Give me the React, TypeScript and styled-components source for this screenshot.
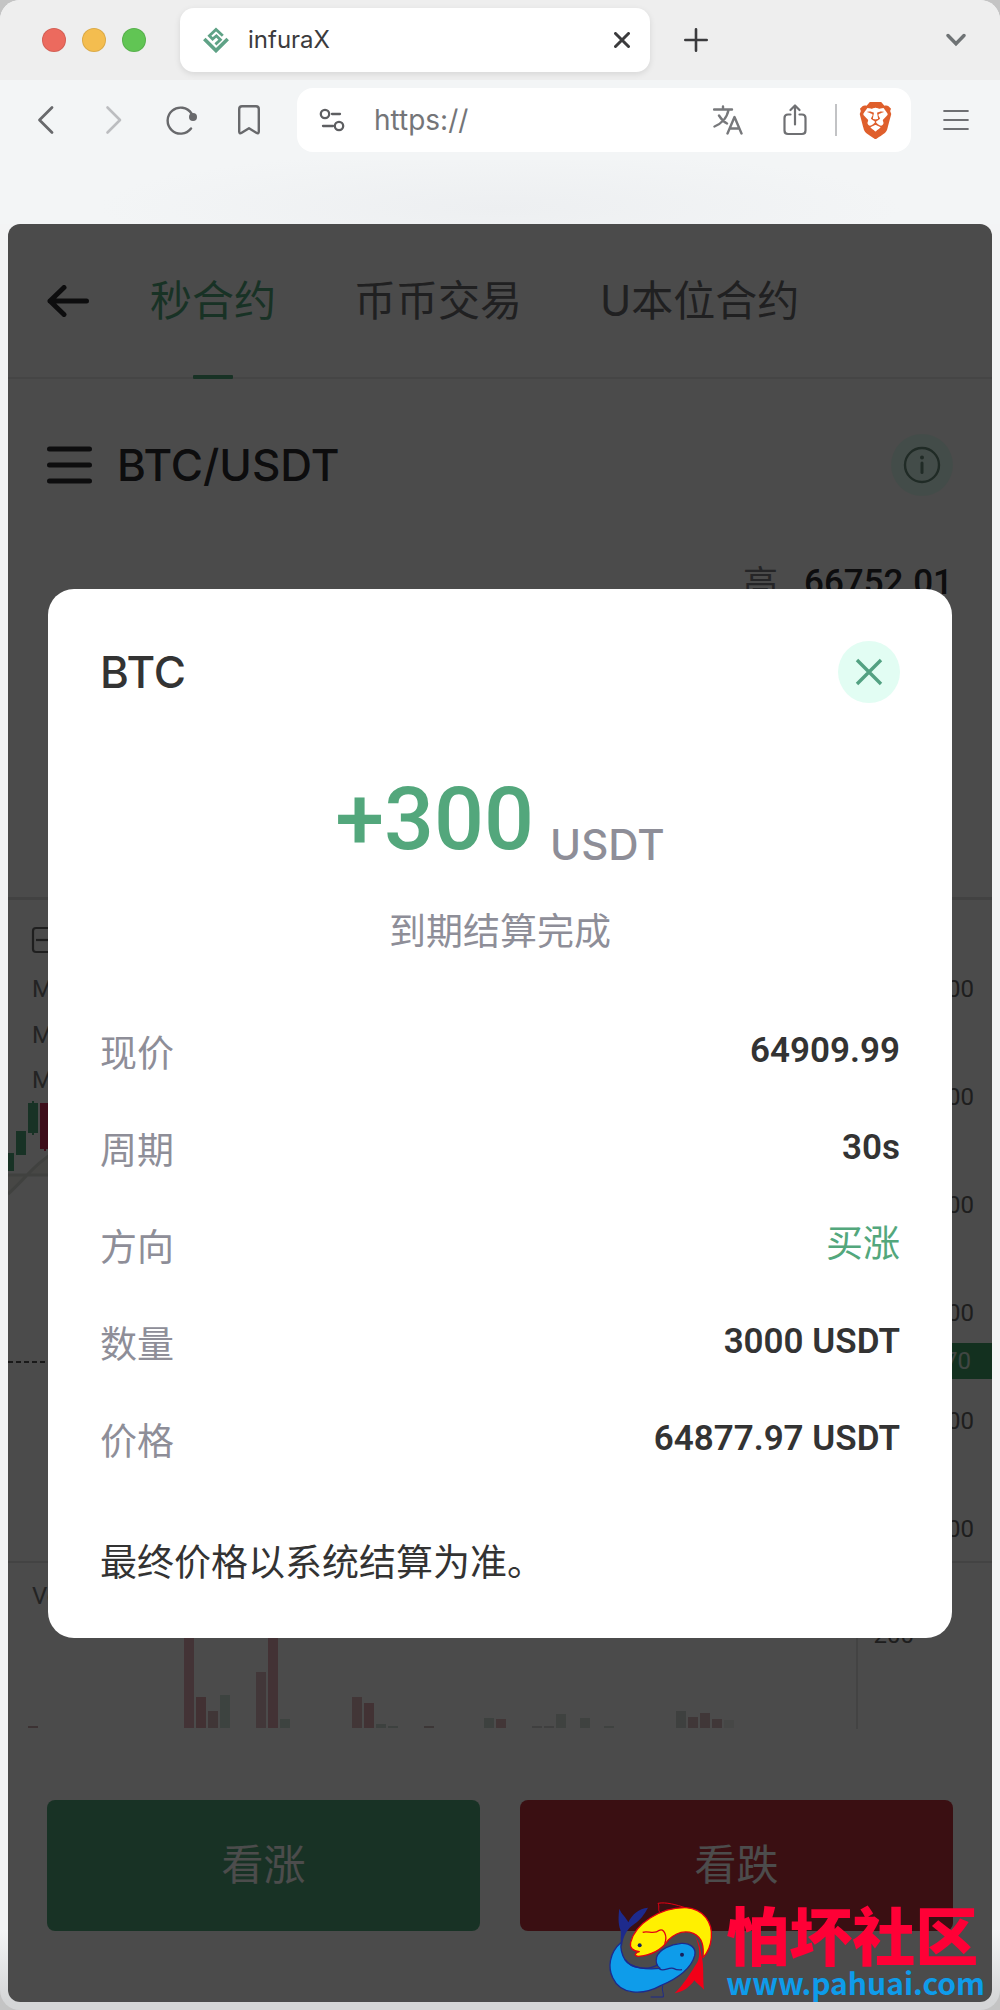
import { useState } from 'react';
import { SiBrave } from 'react-icons/si';
import styled, { createGlobalStyle } from 'styled-components';

type IOrderRow = {
  label: string;
  value: string;
  rise?: boolean;
};

type IBar = {
  x: number;
  height: number;
  color: string;
};

const GREEN = '#53a77c';
const RED = '#c1323c';
const CJK = "'Noto Sans CJK SC', sans-serif";

const tabs = ['秒合约', '币币交易', 'U本位合约'];

const orderRows: IOrderRow[] = [
  { label: '现价', value: '64909.99' },
  { label: '周期', value: '30s' },
  { label: '方向', value: '买涨', rise: true },
  { label: '数量', value: '3000 USDT' },
  { label: '价格', value: '64877.97 USDT' },
];

const priceTicks = [89, 197, 305, 413, 521, 629];

const volumeBars: IBar[] = [
  { x: 20, height: 2, color: '#c8a8ac' },
  { x: 176, height: 96, color: '#e0acb4' },
  { x: 188, height: 31, color: '#dca6ac' },
  { x: 200, height: 17, color: '#d8b6b9' },
  { x: 212, height: 33, color: '#cddfd6' },
  { x: 248, height: 56, color: '#dcb8be' },
  { x: 260, height: 96, color: '#dfa8b2' },
  { x: 272, height: 9, color: '#cddfd6' },
  { x: 344, height: 31, color: '#dcb4ba' },
  { x: 356, height: 25, color: '#dca8b0' },
  { x: 368, height: 4, color: '#cddbd4' },
  { x: 380, height: 2, color: '#cddbd4' },
  { x: 416, height: 2, color: '#c8b4b6' },
  { x: 476, height: 10, color: '#cddbd4' },
  { x: 488, height: 9, color: '#dcb4ba' },
  { x: 524, height: 2, color: '#d4d4d4' },
  { x: 536, height: 2, color: '#d4d4d4' },
  { x: 548, height: 14, color: '#d4dcd8' },
  { x: 572, height: 10, color: '#d4dcd8' },
  { x: 596, height: 2, color: '#d4dcd8' },
  { x: 668, height: 17, color: '#d0d8d4' },
  { x: 680, height: 11, color: '#d8b8bc' },
  { x: 692, height: 15, color: '#d8b8bc' },
  { x: 704, height: 9, color: '#d8b8bc' },
  { x: 716, height: 8, color: '#e9efec' },
];

const TabStrip = () => (
  <TabStripWrapper>
    <Lights>
      <Light $color="#ec6a5e" />
      <Light $color="#f4bd4f" />
      <Light $color="#61c554" />
    </Lights>
    <BrowserTab>
      <svg width="26" height="26" viewBox="0 0 26 26" fill="none" stroke="#5fa286" strokeWidth="3.6">
        <path d="M1.3 12 L13 23.6 L24.7 12" />
        <path d="M19.8 8.8 L13 2.4 L6.4 8.8 L9.6 12 L13.4 8.8 L17.4 12.8 L12.4 17.4" strokeWidth="2.8" />
      </svg>
      <TabTitle>infuraX</TabTitle>
      <IconButton aria-label="close tab">
        <svg width="16" height="16" viewBox="0 0 16 16" stroke="#3b3b3d" strokeWidth="3" strokeLinecap="round">
          <path d="M1.5 1.5 L14.5 14.5 M14.5 1.5 L1.5 14.5" />
        </svg>
      </IconButton>
    </BrowserTab>
    <IconButton aria-label="new tab">
      <svg width="24" height="24" viewBox="0 0 24 24" stroke="#3b3b3d" strokeWidth="2.6" strokeLinecap="round">
        <path d="M12 1.3 V22.7 M1.3 12 H22.7" />
      </svg>
    </IconButton>
    <PushRight>
      <IconButton aria-label="tab list">
        <svg width="20" height="14" viewBox="0 0 20 14" fill="none" stroke="#6f7375" strokeWidth="3.4" strokeLinecap="round">
          <path d="M2 2.5 L10 10.8 L18 2.5" />
        </svg>
      </IconButton>
    </PushRight>
  </TabStripWrapper>
);

const Toolbar = () => {
  const [url, setUrl] = useState('https://');

  return (
    <ToolbarWrapper>
      <NavButtons>
        <IconButton aria-label="back">
          <svg width="22" height="30" viewBox="0 0 22 30" fill="none" stroke="#68696c" strokeWidth="2.8" strokeLinecap="round" strokeLinejoin="round">
            <path d="M17 2.5 L4.5 15 L17 27.5" />
          </svg>
        </IconButton>
        <IconButton aria-label="forward">
          <svg width="26" height="30" viewBox="0 0 26 30" fill="none" stroke="#bcbdc0" strokeWidth="2.6" strokeLinecap="round" strokeLinejoin="round">
            <path d="M9.5 2.5 L22 15 L9.5 27.5" />
          </svg>
        </IconButton>
        <IconButton aria-label="reload">
          <svg width="32" height="30" viewBox="0 0 32 30" fill="none" stroke="#68696c" strokeWidth="2.4" strokeLinecap="round">
            <path d="M26.5 8.5 A13 13 0 1 0 26 23.5" />
            <circle cx="28" cy="12" r="4" fill="#68696c" stroke="none" />
          </svg>
        </IconButton>
        <IconButton aria-label="bookmark">
          <svg width="22" height="30" viewBox="0 0 22 30" fill="none" stroke="#68696c" strokeWidth="2.4" strokeLinejoin="round">
            <path d="M4 1.2 H18 Q20.8 1.2 20.8 4 V26.5 Q20.8 29.4 18.3 27.8 L11 23.3 L3.7 27.8 Q1.2 29.4 1.2 26.5 V4 Q1.2 1.2 4 1.2 Z" />
          </svg>
        </IconButton>
      </NavButtons>
      <AddressBar>
        <svg width="26" height="24" viewBox="0 0 26 24" fill="none" stroke="#5d5e61" strokeWidth="2.3" strokeLinecap="round">
          <circle cx="6" cy="6" r="4.2" />
          <path d="M13 6 H21" />
          <circle cx="20" cy="18" r="4.2" />
          <path d="M4 18 H14" />
        </svg>
        <AddressInput aria-label="address" value={url} onChange={(e) => setUrl(e.target.value)} />
        <AddressActions>
          <IconButton aria-label="translate">
            <svg width="30" height="30" viewBox="0 0 30 30" fill="none" stroke="#77787b" strokeWidth="2.4" strokeLinecap="round" strokeLinejoin="round">
              <path d="M1 4.5 H19 M10 1.5 V4.5 M15.5 5 C14 13 8 19 1.5 21.5 M6 10.5 C8.5 14.5 11 17 14 18.5" />
              <path d="M14.5 28.5 L21.5 12 L28.5 28.5 M17 23.5 H26" />
            </svg>
          </IconButton>
          <IconButton aria-label="share">
            <svg width="24" height="32" viewBox="0 0 24 32" fill="none" stroke="#6f7073" strokeWidth="2.2" strokeLinecap="round" strokeLinejoin="round">
              <path d="M7.5 10.5 H5 Q1.5 10.5 1.5 14 V26.5 Q1.5 30 5 30 H19 Q22.5 30 22.5 26.5 V14 Q22.5 10.5 19 10.5 H16.5" />
              <path d="M12 20.5 V2 M7.5 6 L12 1.5 L16.5 6" />
            </svg>
          </IconButton>
          <Separator />
          <IconButton aria-label="shields">
            <SiBrave size={37} color="#df5f2c" />
          </IconButton>
        </AddressActions>
      </AddressBar>
      <IconButton aria-label="menu">
        <svg width="26" height="22" viewBox="0 0 26 22" stroke="#6f7073" strokeWidth="2.2" strokeLinecap="round">
          <path d="M1.2 2 H24.8 M1.2 11 H24.8 M1.2 20 H24.8" />
        </svg>
      </IconButton>
    </ToolbarWrapper>
  );
};

const TradeHeader = () => (
  <TradeHeaderWrapper>
    <IconButton aria-label="返回">
      <svg width="42" height="32" viewBox="0 0 42 32" fill="none" stroke="#2c2c30" strokeWidth="5" strokeLinecap="round" strokeLinejoin="round">
        <path d="M39.5 16 H3 M17 2.5 L3 16 L17 29.5" />
      </svg>
    </IconButton>
    <TradeTabs>
      {tabs.map((tab, i) => (
        <TradeTab key={tab} href="#" $active={i === 0}>
          {tab}
        </TradeTab>
      ))}
    </TradeTabs>
  </TradeHeaderWrapper>
);

const Market = () => (
  <MarketWrapper>
    <PairRow>
      <IconButton aria-label="交易对">
        <svg width="45" height="38" viewBox="0 0 45 38" stroke="#2c2c30" strokeWidth="5" strokeLinecap="round">
          <path d="M2.5 3 H42.5 M2.5 19 H42.5 M2.5 35 H42.5" />
        </svg>
      </IconButton>
      <PairName>BTC/USDT</PairName>
      <PushRight>
        <RoundButton aria-label="说明">
          <svg width="38" height="38" viewBox="0 0 38 38" fill="none" stroke="#6b8f7f" strokeWidth="2.4" strokeLinecap="round">
            <circle cx="19" cy="19" r="17" />
            <path d="M19 17 V26.5" strokeWidth="3" />
            <circle cx="19" cy="11.5" r="2" fill="#6b8f7f" stroke="none" />
          </svg>
        </RoundButton>
      </PushRight>
    </PairRow>
    <StatRow>
      <span>高</span>
      <StatValue>66752.01</StatValue>
    </StatRow>
  </MarketWrapper>
);

const Chart = () => (
  <ChartSvg viewBox="0 0 984 830" role="img" aria-label="BTC/USDT">
    {/* indicator legend */}
    <g fill="none" stroke="#6a6a6a" strokeWidth="2.2">
      <rect x="25" y="28" width="25" height="24" rx="3" />
      <path d="M28 40 H47" />
    </g>
    <ChartText x="24" y="97" $color="#777777">MA5</ChartText>
    <ChartText x="24" y="143" $color="#777777">MA10</ChartText>
    <ChartText x="24" y="188" $color="#777777">MA30</ChartText>

    {/* candles and averages */}
    <path d="M0 294 C14 284 26 262 50 248 V275 H0 Z" fill="#eeeee8" />
    <path d="M0 294 C16 280 28 262 50 250 M0 275 H50" fill="none" stroke="#d6dad2" strokeWidth="3" />
    <g fill={GREEN}>
      <rect x="-4" y="253" width="10" height="18" />
      <rect x="8" y="231" width="10" height="24" />
      <rect x="20" y="203" width="10" height="30" />
      <rect x="24" y="201" width="2" height="34" />
    </g>
    <g fill="#cc3058">
      <rect x="32" y="203" width="10" height="46" />
      <rect x="36" y="203" width="2" height="48" />
    </g>

    <path d="M0 462 H849" stroke="#555555" strokeWidth="2" strokeDasharray="5 3" />
    <path d="M0 662 H984 M849 0 V829" stroke="#e2e2e2" strokeWidth="2" />

    {priceTicks.map((y, i) => (
      <ChartText key={y} x="966" y={y + 8} textAnchor="end" $color="#666666">
        {65600 - i * 200}
      </ChartText>
    ))}
    <rect x="849" y="443" width="135" height="36" fill="#40a06a" />
    <ChartText x="963" y="469" textAnchor="end" $color="#d8ecdf">64870</ChartText>

    {/* volume */}
    <ChartText x="24" y="704" $color="#777777">Vol</ChartText>
    <ChartText x="906" y="743" textAnchor="end" $color="#666666">200</ChartText>
    {volumeBars.map((bar) => (
      <rect key={bar.x} x={bar.x} y={828 - bar.height} width="10" height={bar.height} fill={bar.color} />
    ))}
  </ChartSvg>
);

const OrderModal = () => (
  <Overlay>
    <Modal role="dialog" aria-label="BTC">
      <ModalHeader>
        <ModalTitle>BTC</ModalTitle>
        <RoundButton aria-label="关闭">
          <svg width="28" height="28" viewBox="0 0 28 28" stroke="#53a182" strokeWidth="3.4">
            <path d="M2 2 L26 26 M26 2 L2 26" />
          </svg>
        </RoundButton>
      </ModalHeader>
      <Profit>
        <ProfitValue>+300</ProfitValue>
        <ProfitUnit>USDT</ProfitUnit>
      </Profit>
      <ModalStatus>到期结算完成</ModalStatus>
      <OrderList>
        {orderRows.map((row) => (
          <OrderItem key={row.label}>
            <OrderLabel>{row.label}</OrderLabel>
            <OrderValue $rise={row.rise}>{row.value}</OrderValue>
          </OrderItem>
        ))}
      </OrderList>
      <ModalNote>最终价格以系统结算为准。</ModalNote>
    </Modal>
  </Overlay>
);

const Watermark = () => (
  <WatermarkWrapper>
    <svg width="106" height="98" viewBox="142 364 318 294" fill="none" strokeLinejoin="round">
      <path d="M184 500 C176 480 184 462 179 450 C172 432 173 408 176 387 C183 405 196 412 203 428 C214 404 234 387 262 384 C250 405 240 420 222 432 C200 446 186 470 184 500 Z" fill="#1d2a8c" />
      <path d="M182 488 C144 520 142 566 156 594 C180 646 246 648 300 618 C352 596 392 564 402 528 C408 504 388 490 362 491 C330 494 296 508 288 532 C284 548 290 560 298 566 C260 570 212 566 194 542 C184 526 178 508 182 488 Z" fill="#0e9cea" stroke="#1d2a8c" strokeWidth="4" />
      <path d="M296 567 C308 578 322 562 338 566 C346 570 354 572 364 570" stroke="#1d2a8c" strokeWidth="4" />
      <path d="M194 540 C210 568 262 572 290 556" stroke="#1d2a8c" strokeWidth="4" />
      <path d="M270 652 H308 C310 640 302 632 306 618" stroke="#1d2a8c" strokeWidth="3" />
      <path d="M210 488 C224 432 300 382 376 384 C430 388 456 430 452 474 C450 500 440 520 427 534 C430 500 426 474 398 461 C368 450 342 462 322 482 C304 510 270 528 232 530 C216 526 226 520 236 516 C216 514 206 504 210 488 Z" fill="#fff000" stroke="#e60012" strokeWidth="4" />
      <path d="M246 458 C262 452 280 466 296 452 C308 444 322 468 312 492" stroke="#e60012" strokeWidth="4" />
      <path d="M298 398 C290 390 298 382 292 371 C316 366 348 376 374 384" stroke="#e60012" strokeWidth="3" />
      <path d="M404 472 C420 492 420 516 424 534 C430 560 426 600 430 630 C420 618 408 612 401 602 C388 622 368 636 342 641 C368 616 390 580 410 548 C420 528 416 496 404 472 Z" fill="#f20018" />
      <circle cx="237" cy="497" r="6" fill="#16205c" />
      <circle cx="364" cy="525" r="6" fill="#16205c" />
    </svg>
    <WatermarkText>
      <WatermarkName>怕坏社区</WatermarkName>
      <WatermarkUrl>www.pahuai.com</WatermarkUrl>
    </WatermarkText>
  </WatermarkWrapper>
);

export default function App() {
  return (
    <>
      <GlobalStyle />
      <Window>
        <TabStrip />
        <Toolbar />
        <BookmarksBar />
        <Page>
          <TradeHeader />
          <Market />
          <Chart />
          <Actions>
            <ActionButton $color={GREEN}>看涨</ActionButton>
            <ActionButton $color={RED}>看跌</ActionButton>
          </Actions>
          <OrderModal />
        </Page>
        <Watermark />
      </Window>
    </>
  );
}

const GlobalStyle = createGlobalStyle`
  * {
    box-sizing: border-box;
  }

  body {
    margin: 0;
    background: #c4c4c4;
    font-family: Inter, ${CJK};
  }

  button {
    padding: 0;
    border: none;
    background: none;
    font-family: inherit;
    cursor: pointer;
  }

  svg {
    display: block;
    flex-shrink: 0;
  }
`;

const Window = styled.div`
  position: relative;
  border-radius: 20px;
  overflow: hidden;
  background: linear-gradient(to top, #d5d6d7 8px, #f3f4f5 80px);
`;

const IconButton = styled.button`
  display: flex;
  align-items: center;
  justify-content: center;
`;

const PushRight = styled.div`
  margin-left: auto;
`;

const TabStripWrapper = styled.div`
  display: flex;
  align-items: center;
  height: 80px;
  padding: 0 34px 0 42px;
  background: #eeeeee;
`;

const Lights = styled.div`
  display: flex;
  gap: 16px;
  margin-right: 34px;
`;

const Light = styled.span<{ $color: string }>`
  width: 24px;
  height: 24px;
  border-radius: 50%;
  background: ${(p) => p.$color};
  box-shadow: inset 0 0 0 1px rgba(0, 0, 0, 0.1);
`;

const BrowserTab = styled.div`
  display: flex;
  align-items: center;
  flex: 0 1 470px;
  height: 64px;
  margin-right: 34px;
  padding: 0 20px 0 23px;
  border-radius: 14px;
  background: #ffffff;
  box-shadow: 0 2px 6px rgba(0, 0, 0, 0.1);
`;

const TabTitle = styled.span`
  flex: 1;
  margin-left: 19px;
  font-size: 24px;
  line-height: 32px;
  color: #3b3b3d;
`;

const ToolbarWrapper = styled.div`
  display: flex;
  align-items: center;
  height: 80px;
  padding: 0 31px 0 35px;
  background: #f3f5f6;
`;

const NavButtons = styled.div`
  display: flex;
  gap: 41px;
  margin-right: 37px;
`;

const AddressBar = styled.div`
  display: flex;
  align-items: center;
  flex: 1;
  min-width: 0;
  height: 64px;
  margin-right: 32px;
  padding: 0 17px 0 22px;
  border-radius: 16px;
  background: #ffffff;
`;

const AddressInput = styled.input`
  flex: 1;
  width: 0;
  min-width: 0;
  margin-left: 29px;
  padding: 0;
  border: none;
  outline: none;
  background: none;
  font-family: Inter, sans-serif;
  font-size: 28px;
  line-height: 36px;
  color: #747578;
`;

const AddressActions = styled.div`
  display: flex;
  align-items: center;
  gap: 40px;
`;

const Separator = styled.span`
  width: 2px;
  height: 32px;
  margin: 0 -20px 0 -12px;
  background: #c2c3c5;
`;

const BookmarksBar = styled.div`
  height: 64px;
  background:
    radial-gradient(ellipse 40% 90% at 50% 75%, #edeff1, transparent),
    #f3f5f6;
`;

const Page = styled.main`
  position: relative;
  margin: 0 8px 8px;
  border-radius: 12px;
  overflow: hidden;
  background: #fafafa;
`;

const TradeHeaderWrapper = styled.header`
  display: flex;
  align-items: center;
  gap: 61px;
  height: 155px;
  padding: 0 39px;
  border-bottom: 2px solid #e6e6e6;
`;

const TradeTabs = styled.nav`
  display: flex;
  gap: 78px;
  height: 155px;
`;

const TradeTab = styled.a<{ $active: boolean }>`
  display: flex;
  flex-direction: column;
  align-items: center;
  font-size: 42px;
  line-height: 156px;
  text-decoration: none;
  color: ${(p) => (p.$active ? GREEN : '#6c6c70')};

  &::after {
    content: '';
    flex-shrink: 0;
    width: 40px;
    height: 4px;
    border-radius: 1px;
    margin-top: -4px;
    background: ${(p) => (p.$active ? GREEN : 'transparent')};
  }
`;

const MarketWrapper = styled.section`
  height: 521px;
  padding: 55px 39px 0;
  border-bottom: 3px solid #dedede;
`;

const PairRow = styled.div`
  display: flex;
  align-items: center;
`;

const PairName = styled.h1`
  margin: 0 0 0 25px;
  font-size: 44px;
  font-weight: 500;
  line-height: 62px;
  color: #2c2c30;
`;

const RoundButton = styled(IconButton)`
  width: 62px;
  height: 62px;
  border-radius: 50%;
  background: #e2fdf3;
`;

const StatRow = styled.div`
  display: flex;
  align-items: center;
  justify-content: flex-end;
  gap: 26px;
  margin-top: 63px;
  font-size: 35px;
  line-height: 48px;
  color: #7c7c82;
`;

const StatValue = styled.span`
  font-family: Roboto, sans-serif;
  font-weight: 500;
  color: #2c2c30;
`;

const ChartSvg = styled.svg`
  width: 100%;
`;

const ChartText = styled.text<{ $color: string }>`
  font-family: Roboto, sans-serif;
  font-size: 24px;
  fill: ${(p) => p.$color};
`;

const Actions = styled.div`
  display: flex;
  gap: 40px;
  padding: 70px 39px 71px;
`;

const ActionButton = styled.button<{ $color: string }>`
  && {
    flex: 1;
    height: 131px;
    padding-bottom: 8px;
    border-radius: 8px;
    background: ${(p) => p.$color};
    font-size: 42px;
    color: #ffffff;
  }
`;

const Overlay = styled.div`
  position: absolute;
  inset: 0;
  display: flex;
  align-items: center;
  justify-content: center;
  padding: 0 40px;
  background: rgba(0, 0, 0, 0.7);
`;

const Modal = styled.section`
  width: 100%;
  padding: 52px;
  border-radius: 26px;
  background: #ffffff;
`;

const ModalHeader = styled.header`
  display: flex;
  align-items: center;
  justify-content: space-between;
`;

const ModalTitle = styled.h2`
  margin: 0;
  font-size: 44px;
  font-weight: 500;
  line-height: 62px;
  color: #333333;
`;

const Profit = styled.div`
  display: flex;
  align-items: flex-end;
  justify-content: center;
  gap: 16px;
  margin-top: 66px;
`;

const ProfitValue = styled.span`
  font-family: Roboto, sans-serif;
  font-size: 88px;
  font-weight: 500;
  line-height: 100px;
  color: ${GREEN};
`;

const ProfitUnit = styled.span`
  font-size: 42px;
  font-weight: 500;
  line-height: 48px;
  color: #8e8e98;
`;

const ModalStatus = styled.p`
  margin: 40px 0 48px;
  font-size: 37px;
  line-height: 46px;
  text-align: center;
  color: #8e8e98;
`;

const OrderList = styled.dl`
  margin: 0;
`;

const OrderItem = styled.div`
  display: flex;
  align-items: center;
  justify-content: space-between;
  height: 97px;
`;

const OrderLabel = styled.dt`
  padding-top: 6px;
  font-size: 37px;
  line-height: 46px;
  color: #8e8e98;
`;

const OrderValue = styled.dd<{ $rise?: boolean }>`
  margin: 0;
  font-family: Roboto, ${CJK};
  font-size: ${(p) => (p.$rise ? 37 : 35)}px;
  font-weight: ${(p) => (p.$rise ? 400 : 600)};
  line-height: 46px;
  color: ${(p) => (p.$rise ? GREEN : '#333333')};
`;

const ModalNote = styled.p`
  margin: 52px 0 0;
  font-size: 37px;
  line-height: 46px;
  color: #333333;
`;

const WatermarkWrapper = styled.div`
  position: absolute;
  right: 15px;
  bottom: 11px;
  display: flex;
  align-items: flex-end;
  gap: 12px;
`;

const WatermarkText = styled.div`
  display: flex;
  flex-direction: column;
  font-family: ${CJK};
`;

const WatermarkName = styled.span`
  font-size: 63px;
  font-weight: 900;
  line-height: 64px;
  color: #ff0036;
`;

const WatermarkUrl = styled.span`
  font-size: 30px;
  font-weight: 700;
  line-height: 34px;
  color: #0e9cea;
`;
